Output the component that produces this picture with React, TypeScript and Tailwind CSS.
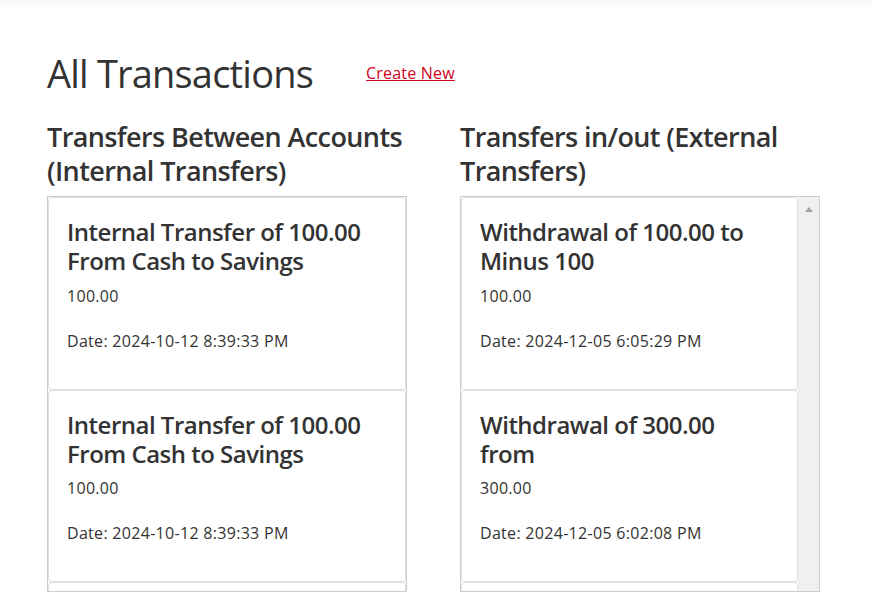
type Transaction = {
  title: string;
  amount: string;
  date: string;
};

const internalTransfers: Transaction[] = [
  { title: "Internal Transfer of 100.00 From Cash to Savings", amount: "100.00", date: "2024-10-12 8:39:33 PM" },
  { title: "Internal Transfer of 100.00 From Cash to Savings", amount: "100.00", date: "2024-10-12 8:39:33 PM" },
  { title: "Internal Transfer of 50.00 From Savings to Cash", amount: "50.00", date: "2024-10-10 2:14:05 PM" },
];

const externalTransfers: Transaction[] = [
  { title: "Withdrawal of 100.00 to Minus 100", amount: "100.00", date: "2024-12-05 6:05:29 PM" },
  { title: "Withdrawal of 300.00\nfrom", amount: "300.00", date: "2024-12-05 6:02:08 PM" },
  { title: "Deposit of 500.00 to Cash", amount: "500.00", date: "2024-12-01 9:12:44 AM" },
];

function TransactionCard({ tx }: { tx: Transaction }) {
  return (
    <div className="border border-[#dfdfdf] rounded-[4px] px-[18px] pt-5 pb-[36px] bg-white">
      <h4 className="text-[24px] leading-[28.8px] font-semibold tracking-[-0.5px] mb-2 whitespace-pre-line">{tx.title}</h4>
      <p className="text-base leading-6 tracking-[0.3px] mb-[21px]">{tx.amount}</p>
      <p className="text-base leading-6 tracking-[0.3px]">Date: {tx.date}</p>
    </div>
  );
}

function Section({ heading, items, scrollbar }: { heading: string; items: Transaction[]; scrollbar?: boolean }) {
  return (
    <section className="flex flex-col min-h-0">
      <h3 className="text-[27px] leading-[33.6px] font-semibold tracking-[-0.6px] mb-[9px]">{heading}</h3>
      <div className="flex flex-1 min-h-0 border border-[#cccccc] overflow-hidden">
        <div className="flex-1 flex flex-col">
          {items.map((tx, i) => (
            <TransactionCard key={i} tx={tx} />
          ))}
        </div>
        {scrollbar && (
          <div className="w-[21px] bg-[#f0f0f0] flex justify-center pt-[10px]">
            <div className="w-0 h-0 border-l-[4px] border-r-[4px] border-b-[5px] border-l-transparent border-r-transparent border-b-[#a3a3a3]" />
          </div>
        )}
      </div>
    </section>
  );
}

export default function App() {
  return (
    <div className="h-[592px] overflow-hidden bg-white text-[#333333] font-['Open_Sans',sans-serif] flex flex-col">
      <div className="h-3 shrink-0 bg-linear-to-b from-[#f7f7f7] to-white" />
      <main className="flex-1 flex flex-col min-h-0 pt-[37px] pl-[47px] pr-[52px]">
        <div className="flex items-center mb-[23px]">
          <h1 className="text-[38px] leading-[48px] tracking-[-0.8px]">All Transactions</h1>
          <a href="#" className="ml-[53px] text-base leading-6 tracking-[0.2px] text-[#d0021b] underline">
            Create New
          </a>
        </div>
        <div className="grid grid-cols-2 gap-x-[53px] flex-1 min-h-0">
          <Section heading="Transfers Between Accounts (Internal Transfers)" items={internalTransfers} />
          <Section heading="Transfers in/out (External Transfers)" items={externalTransfers} scrollbar />
        </div>
      </main>
    </div>
  );
}
